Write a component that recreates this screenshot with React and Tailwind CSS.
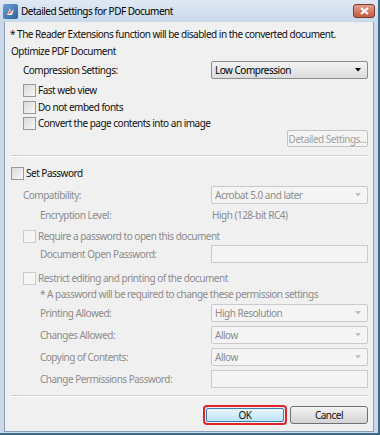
import React from 'react';

const font = { fontFamily: '"Noto Sans", "Open Sans", sans-serif' };

const Checkbox = ({ disabled }) => (
  <span
    className={`inline-block w-[13px] h-[13px] border shrink-0 ${
      disabled ? 'border-[#cbcbcb] bg-[#f5f5f5]' : 'border-[#9a9a9a] bg-gradient-to-br from-[#dadada] to-[#f9f9f9]'
    }`}
  />
);

const Select = ({ value, disabled }) => (
  <div
    className={`w-[157px] h-[18px] flex items-center justify-between pl-[3px] pr-[6px] rounded-[2px] border ${
      disabled
        ? 'border-[#cacaca] bg-[#f4f4f4] text-[#8d8d8d]'
        : 'border-[#8b8b8b] bg-gradient-to-b from-[#f3f3f3] to-[#dcdcdc] text-black'
    }`}
  >
    <span>{value}</span>
    <svg width="6" height="4" viewBox="0 0 6 4">
      <path d="M0 0h6L3 3.5z" fill={disabled ? '#c0c0c0' : '#000'} />
    </svg>
  </div>
);

const Input = () => <div className="w-[157px] h-[18px] border border-[#cacaca] bg-[#f4f4f4]" />;

const Row = ({ className = '', children }) => (
  <div className={`h-[14px] flex items-center whitespace-nowrap ${className}`}>{children}</div>
);

const Separator = ({ className = '' }) => (
  <div className={`h-[2px] border-t border-[#cfcfcf] border-b border-b-white ${className}`} />
);

export default function App() {
  return (
    <div
      className="w-[380px] h-[435px] bg-[#cbd9e8] border-r-2 border-b-2 border-r-[#3d6c8a] border-b-[#3d6c8a] flex flex-col text-[10px] leading-none tracking-[-0.5px] text-[#111]"
      style={font}
    >
      {/* Title bar */}
      <div className="h-[22px] flex items-center pl-[3px] pr-[3px] bg-gradient-to-b from-[#dfe9f5] to-[#c9d9ea] shrink-0">
        <div className="w-[15px] h-[15px] rounded-[2px] bg-gradient-to-br from-[#6ea0d6] to-[#2f5f9e] flex items-center justify-center">
          <svg width="11" height="11" viewBox="0 0 11 11">
            <path d="M2 9 L5 2 L6 6 L9 3 L7 9 Z" fill="#f4e8c8" />
            <path d="M3 8 L5 4 L6 7 Z" fill="#e0604a" />
          </svg>
        </div>
        <span className="ml-[3px] text-black">Detailed Settings for PDF Document</span>
        <div className="ml-auto w-[22px] h-[14px] rounded-[3px] border border-[#7a3b30] bg-gradient-to-b from-[#e3a08f] to-[#c35a44] flex items-center justify-center">
          <svg width="9" height="8" viewBox="0 0 9 8">
            <path d="M1 1L8 7M8 1L1 7" stroke="#fff" strokeWidth="2" />
          </svg>
        </div>
      </div>

      {/* Body */}
      <div className="flex-1 mx-[4px] mb-[1px] bg-[#f0f0f0] border border-[#8ba0b8] border-t-0 flex flex-col pl-[5px] pr-[5px]">
        <Row className="mt-[5px]">* The Reader Extensions function will be disabled in the converted document.</Row>
        <Row className="mt-[3px] ml-[1px]">Optimize PDF Document</Row>

        <div className="mt-[3px] ml-[13px] flex items-center justify-between">
          <span>Compression Settings:</span>
          <Select value="Low Compression" />
        </div>
        <Row className="mt-[4px] ml-[13px] gap-[2px]"><Checkbox /><span>Fast web view</span></Row>
        <Row className="mt-[3px] ml-[13px] gap-[2px]"><Checkbox /><span>Do not embed fonts</span></Row>
        <Row className="mt-[2px] ml-[13px] gap-[2px]"><Checkbox /><span>Convert the page contents into an image</span></Row>
        <div className="flex justify-end">
          <div className="w-[81px] h-[17px] border border-[#c2c2c2] rounded-[2px] bg-[#f4f4f4] text-[#a0a0a0] flex items-center justify-center whitespace-nowrap">
            Detailed Settings...
          </div>
        </div>

        <Separator className="mt-[8px] ml-[1px]" />

        <Row className="mt-[9px] ml-[1px] gap-[2px]"><Checkbox /><span>Set Password</span></Row>

        <div className="text-[#8d8d8d] flex flex-col">
          <div className="mt-[6px] ml-[13px] flex items-center justify-between">
            <span>Compatibility:</span>
            <Select value="Acrobat 5.0 and later" disabled />
          </div>
          <Row className="mt-[4px] ml-[30px]">
            <span className="w-[172px]">Encryption Level:</span>
            <span>High (128-bit RC4)</span>
          </Row>
          <Row className="mt-[7px] ml-[13px] gap-[2px]"><Checkbox disabled /><span>Require a password to open this document</span></Row>
          <div className="mt-[2px] ml-[30px] flex items-center justify-between">
            <span>Document Open Password:</span>
            <Input />
          </div>
          <Row className="mt-[8px] ml-[13px] gap-[2px]"><Checkbox disabled /><span>Restrict editing and printing of the document</span></Row>
          <Row className="mt-[2px] ml-[30px]">* A password will be required to change these permission settings</Row>
          <div className="mt-[3px] ml-[30px] flex flex-col gap-[4px]">
            <div className="flex items-center justify-between">
              <span>Printing Allowed:</span>
              <Select value="High Resolution" disabled />
            </div>
            <div className="flex items-center justify-between">
              <span>Changes Allowed:</span>
              <Select value="Allow" disabled />
            </div>
            <div className="flex items-center justify-between">
              <span>Copying of Contents:</span>
              <Select value="Allow" disabled />
            </div>
            <div className="flex items-center justify-between">
              <span>Change Permissions Password:</span>
              <Input />
            </div>
          </div>
        </div>

        <Separator className="mt-[7px] ml-[1px]" />

        <div className="mt-[8px] flex justify-end items-center gap-[3px]">
          <div className="w-[84px] h-[20px] rounded-[4px] border-2 border-[#e0242c] p-[1px]">
            <div className="w-full h-full rounded-[2px] border border-[#3c7fb1] bg-gradient-to-b from-[#e8f6fd] to-[#bde3f7] flex items-center justify-center">OK</div>
          </div>
          <div className="w-[78px] h-[18px] rounded-[3px] border border-[#707070] bg-gradient-to-b from-[#f2f2f2] to-[#d4d4d4] flex items-center justify-center">
            Cancel
          </div>
        </div>
      </div>
    </div>
  );
}
